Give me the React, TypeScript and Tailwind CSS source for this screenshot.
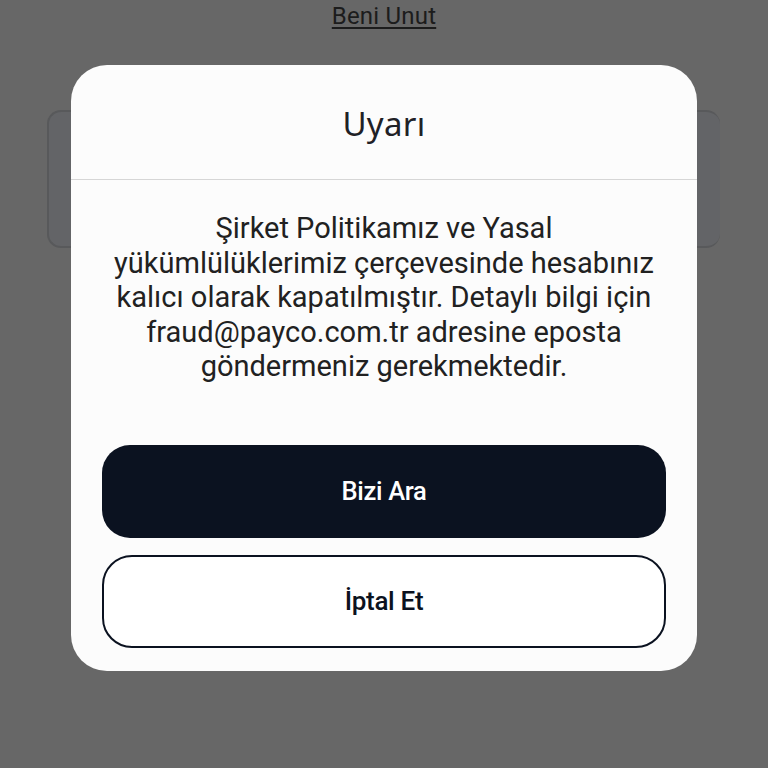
export default function App() {
  return (
    <div className="relative h-[768px] w-full overflow-hidden bg-[#676767] font-['Roboto',sans-serif]">
      {/* Page behind the overlay */}
      <div className="flex flex-col items-center">
        <a className="mt-[1px] text-[24px] leading-[30px] text-[#1c1c1c] underline decoration-[1.5px] underline-offset-[3px] tracking-[0.2px]">
          Beni Unut
        </a>
        <div className="mt-[79px] ml-[47px] h-[138px] w-[673px] self-start rounded-[14px] border-2 border-r-0 border-[#58595b] bg-[#636467]"></div>
      </div>

      {/* Dialog */}
      <div className="absolute left-[71px] top-[65px] flex h-[606px] w-[626px] flex-col rounded-[36px] bg-[#fcfcfc]">
        <div className="flex h-[115px] items-center justify-center border-b border-[#d6d6d6] pt-[3px]">
          <h2 className="text-[33px] leading-none text-[#1f2126] font-['Noto_Sans',sans-serif] tracking-[0.3px]">Uyarı</h2>
        </div>
        <p className="mt-[31px] text-center text-[29px] leading-[34.5px] text-[#212121]">
          Şirket Politikamız ve Yasal
          <br />
          yükümlülüklerimiz çerçevesinde hesabınız
          <br />
          kalıcı olarak kapatılmıştır. Detaylı bilgi için
          <br />
          fraud@payco.com.tr adresine eposta
          <br />
          göndermeniz gerekmektedir.
        </p>
        <div className="mt-auto flex flex-col gap-[17px] px-[31px] pb-[23px]">
          <button className="h-[93px] w-full rounded-[28px] bg-[#0b1220] text-[25.5px] font-medium text-white tracking-[-0.3px]">
            Bizi Ara
          </button>
          <button className="h-[93px] w-full rounded-[30px] border-2 border-[#0b1220] bg-white text-[26px] font-medium text-[#0b1220] tracking-[-0.3px]">
            İptal Et
          </button>
        </div>
      </div>
    </div>
  );
}
